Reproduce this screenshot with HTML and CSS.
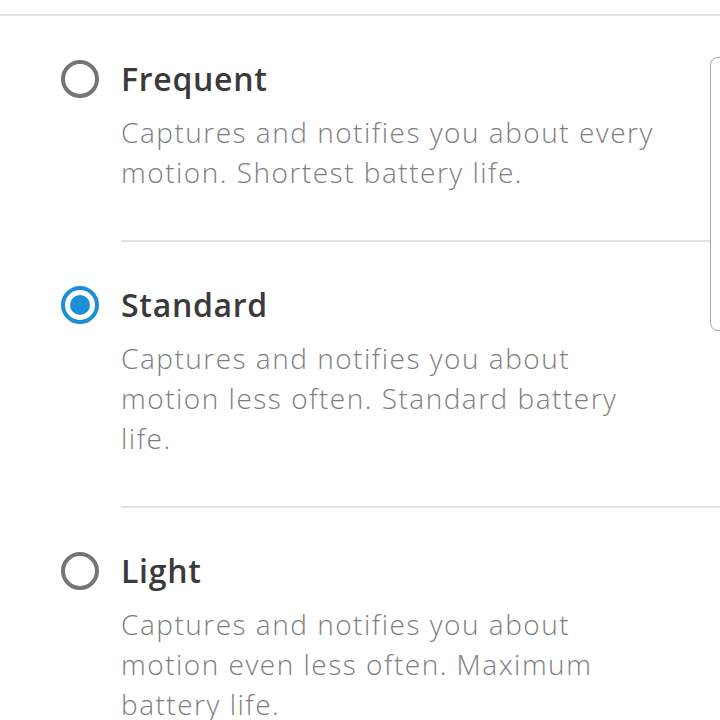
FILE: index.html
```html
<!DOCTYPE html>
<html lang="en">

<head>
  <meta charset="UTF-8" />
  <meta name="viewport" content="width=device-width, initial-scale=1" />
  <title>Motion Frequency</title>
  <link rel="stylesheet" href="styles.css">
</head>

<body>
  <div class="layout">
    <div class="top-bar"></div>

    <div class="options">
      <label class="option">
        <span class="radio"></span>
        <div class="option-body">
          <div class="option-title">Frequent</div>
          <div class="option-desc">Captures and notifies you about every motion. Shortest battery life.</div>
        </div>
      </label>

      <label class="option">
        <span class="radio checked"></span>
        <div class="option-body">
          <div class="option-title">Standard</div>
          <div class="option-desc">Captures and notifies you about motion less often. Standard battery life.</div>
        </div>
      </label>

      <label class="option">
        <span class="radio"></span>
        <div class="option-body">
          <div class="option-title">Light</div>
          <div class="option-desc">Captures and notifies you about motion even less often. Maximum battery life.</div>
        </div>
      </label>
    </div>

    <div class="side-panel"></div>
  </div>
</body>

</html>
```

FILE: styles.css
```css
body,
html {
  margin: 0;
  padding: 0;
  height: 100%;
  font-family: 'Open Sans', 'Lato', Arial, sans-serif;
  background: #fff;
  color: #3a3a3a;
  overflow: hidden;
}

.layout {
  position: relative;
  height: 100%;
  width: 100%;
  overflow: hidden;
}

.top-bar {
  height: 14px;
  border-bottom: 2px solid #e2e2e2;
}

.options {
  display: flex;
  flex-direction: column;
}

.option {
  display: flex;
  align-items: flex-start;
  gap: 22px;
  padding-left: 61px;
}

.radio {
  flex: none;
  box-sizing: border-box;
  width: 38px;
  height: 38px;
  margin-top: 44px;
  border: 4px solid #757575;
  border-radius: 50%;
  display: flex;
  align-items: center;
  justify-content: center;
}

.radio.checked {
  border-color: #1d8fd6;
}

.radio.checked::after {
  content: "";
  width: 20px;
  height: 20px;
  border-radius: 50%;
  background: #1d8fd6;
}

.option-body {
  flex: 1;
  padding: 43px 51px 48px 0;
  border-bottom: 2px solid #e2e2e2;
}

.option-title {
  font-size: 32px;
  line-height: 40px;
  font-weight: 600;
  letter-spacing: 0.7px;
  color: #3a3a3a;
  margin-bottom: 13px;
}

.option-desc {
  font-size: 28px;
  line-height: 40px;
  font-weight: 300;
  letter-spacing: 1.5px;
  color: #7e7e7e;
}

.side-panel {
  position: absolute;
  left: 710px;
  top: 57px;
  width: 40px;
  height: 274px;
  box-sizing: border-box;
  border: 1px solid #a8a8a8;
  border-radius: 8px;
  background: #fff;
}
```
